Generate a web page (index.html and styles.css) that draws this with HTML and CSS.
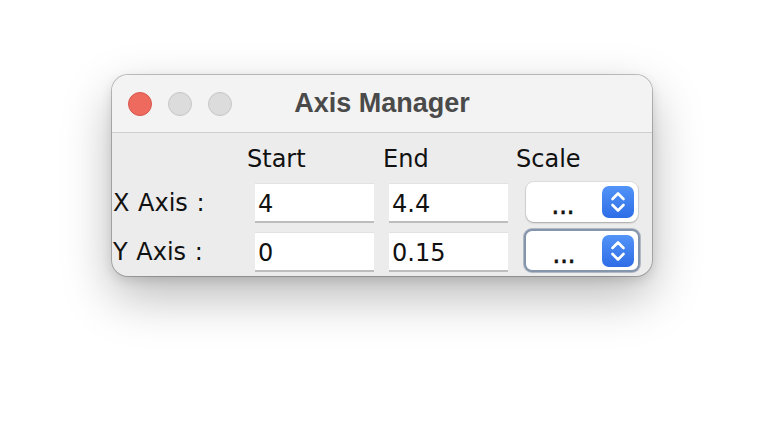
FILE: index.html
```html
<!DOCTYPE html>
<html>
<head>
<meta charset="utf-8">
<link rel="stylesheet" href="styles.css">
</head>
<body>
<div class="window">
  <div class="titlebar">
    <div class="lights">
      <span class="light red"></span>
      <span class="light"></span>
      <span class="light"></span>
    </div>
    <div class="title">Axis Manager</div>
  </div>
  <div class="content">
    <div class="row header">
      <span class="lbl"></span>
      <span class="h h-start">Start</span>
      <span class="h h-end">End</span>
      <span class="h h-scale">Scale</span>
    </div>
    <div class="row r1">
      <span class="lbl">X Axis :</span>
      <span class="field f-start">4</span>
      <span class="field f-end">4.4</span>
      <span class="combo">
        <span class="combo-text">...</span>
        <span class="stepper"><svg viewBox="0 0 32 32" width="32" height="32"><path d="M10.5 13 L16 7.5 L21.5 13 M10.5 19 L16 24.5 L21.5 19" fill="none" stroke="#fff" stroke-width="2.6" stroke-linecap="round" stroke-linejoin="round"/></svg></span>
      </span>
    </div>
    <div class="row r2">
      <span class="lbl">Y Axis :</span>
      <span class="field f-start">0</span>
      <span class="field f-end">0.15</span>
      <span class="combo focused">
        <span class="combo-text">...</span>
        <span class="stepper"><svg viewBox="0 0 32 32" width="32" height="32"><path d="M10.5 13 L16 7.5 L21.5 13 M10.5 19 L16 24.5 L21.5 19" fill="none" stroke="#fff" stroke-width="2.6" stroke-linecap="round" stroke-linejoin="round"/></svg></span>
      </span>
    </div>
  </div>
</div>
</body>
</html>
```
FILE: styles.css
```css
html, body {
  margin: 0;
  padding: 0;
  background: #ffffff;
  width: 764px;
  height: 424px;
  overflow: hidden;
}
body {
  padding: 75px 0 0 112px;
  box-sizing: border-box;
  font-family: "DejaVu Sans", sans-serif;
}
.window {
  width: 540px;
  height: 201px;
  box-sizing: border-box;
  background: #ececec;
  border-radius: 16px;
  box-shadow: 0 0 0 1px rgba(0,0,0,0.22), 0 20px 50px rgba(0,0,0,0.28), 0 4px 12px rgba(0,0,0,0.12);
  overflow: hidden;
  display: flex;
  flex-direction: column;
}
.titlebar {
  height: 57px;
  flex: none;
  background: #f3f3f3;
  border-bottom: 1px solid #d0d0d0;
  display: flex;
  align-items: center;
  position: relative;
}
.lights {
  display: flex;
  gap: 16px;
  padding-left: 16px;
}
.light {
  width: 22px;
  height: 22px;
  border-radius: 50%;
  background: #dcdcdc;
  border: 1px solid #c6c6c6;
}
.light.red {
  background: #ee6a5f;
  border-color: #d8554b;
}
.title {
  position: absolute;
  left: 0;
  right: 0;
  top: 13px;
  text-align: center;
  font-family: "Liberation Sans", sans-serif;
  font-weight: bold;
  font-size: 27px;
  color: #4a4a4a;
}
.content {
  flex: 1;
  padding-top: 8px;
  color: #111;
  font-size: 24px;
}
.row {
  display: flex;
  align-items: center;
}
.header {
  height: 35px;
  padding-bottom: 7px;
}
.header .lbl { width: 135px; }
.h { display: block; }
.h-start { width: 136px; }
.h-end { width: 133px; }
.r1 { height: 40px; }
.r2 { height: 40px; margin-top: 9px; }
.lbl {
  width: 143px;
  flex: none;
  padding-left: 1px;
  box-sizing: border-box;
  word-spacing: 1px;
}
.field {
  width: 119px;
  height: 40px;
  box-sizing: border-box;
  background: #ffffff;
  border-top: 1px solid #e2e2e2;
  border-bottom: 2px solid #bdbdbd;
  padding: 0 3px;
  line-height: 40px;
  flex: none;
}
.f-start { margin-right: 15px; }
.f-end { margin-right: 17px; }
.combo {
  width: 112px;
  height: 40px;
  margin-top: -3px;
  margin-left: 1px;
  box-sizing: border-box;
  background: #ffffff;
  border-radius: 8px;
  box-shadow: 0 0 0 1px rgba(0,0,0,0.06), 0 1px 2px rgba(0,0,0,0.25);
  display: flex;
  align-items: center;
  padding: 0 4px 0 0;
}
.combo.focused {
  width: 116px;
  height: 43px;
  margin-left: -1px;
  margin-top: -3px;
  border: 2px solid #8595ab;
  box-shadow: 0 0 0 1px #b0b8c4;
  padding-right: 4px;
}
.focused .combo-text { padding-left: 2px; }
.combo-text {
  flex: 1;
  text-align: center;
  padding-right: 2px;
  line-height: 1;
  margin-top: 9px;
  font-size: 24px;
  -webkit-text-stroke: 0.6px #111;
}
.stepper {
  width: 32px;
  height: 32px;
  border-radius: 7px;
  background: linear-gradient(#5294f8, #2e6de6);
  display: flex;
  flex: none;
}
.stepper svg { display: block; }
```
